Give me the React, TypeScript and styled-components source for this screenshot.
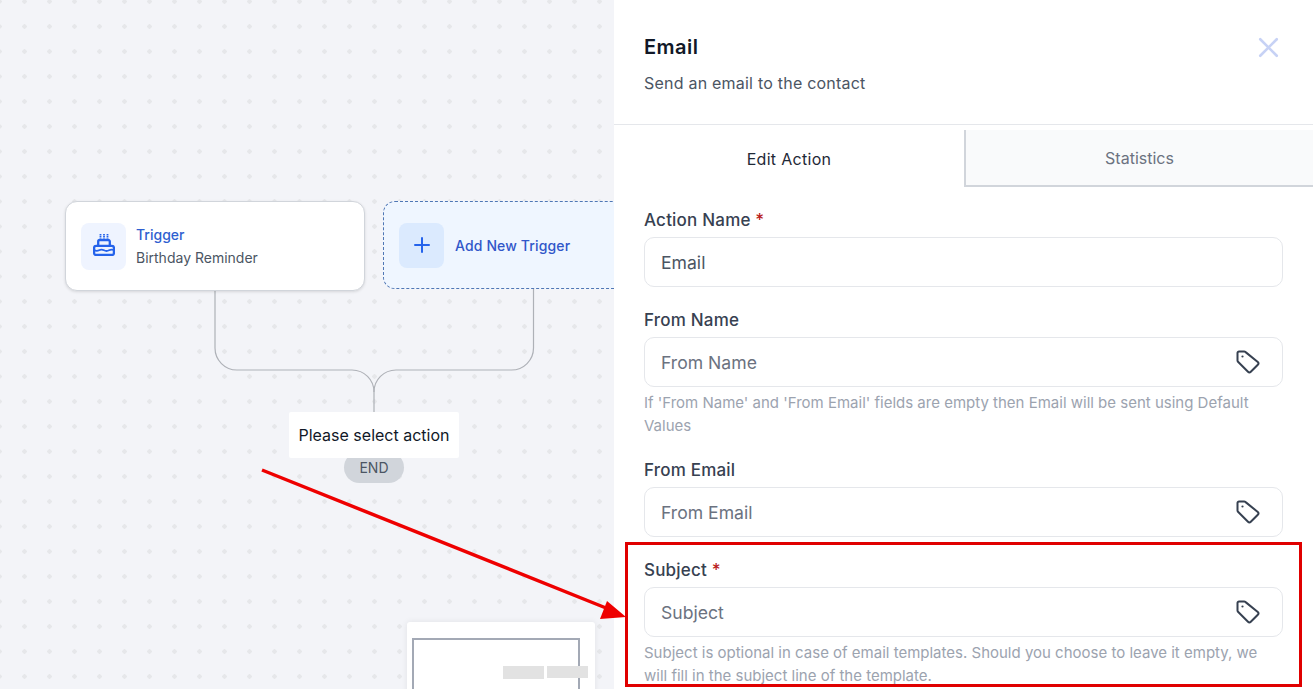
import React from "react";
import styled, { createGlobalStyle } from "styled-components";
import { Plus, X } from "lucide-react";

const fields = [
  { label: "From Name", placeholder: "From Name", tag: true, hint: "If 'From Name' and 'From Email' fields are empty then Email will be sent using Default Values" },
  { label: "From Email", placeholder: "From Email", tag: true },
  { label: "Subject", placeholder: "Subject", tag: true, required: true, hint: "Subject is optional in case of email templates. Should you choose to leave it empty, we will fill in the subject line of the template." },
];

const TagIcon = () => (
  <svg width="24" height="24" viewBox="0 0 24 24" fill="none" stroke="#374151" strokeWidth="2" strokeLinejoin="round">
    <path d="M3 1.5H8a2.4 2.4 0 0 1 1.6.6L21.8 12a2 2 0 0 1 0 2.8L14.8 21.8a2 2 0 0 1-2.8 0L2 11.8A2 2 0 0 1 1.5 10.4V3A1.5 1.5 0 0 1 3 1.5z" />
    <circle cx="6.5" cy="6.5" r="1.1" fill="#374151" stroke="none" />
  </svg>
);

const Field = ({ label, placeholder, value, tag, required, hint }: any) => (
  <FieldWrap>
    <Label>
      {label}
      {required && <Star> *</Star>}
    </Label>
    <InputBox>
      <Input placeholder={placeholder} defaultValue={value} />
      {tag && <TagIcon />}
    </InputBox>
    {hint && <Hint>{hint}</Hint>}
  </FieldWrap>
);

const CakeIcon = () => (
  <CakeSvg width="22" height="22" viewBox="0 0 22 22" fill="none" stroke="#2563eb" strokeWidth="2.3">
    <path d="M7.5 0v4.8M11 0v4.8M14.5 0v4.8" strokeWidth="1.8" strokeDasharray="1.5 0.6" />
    <path d="M5.2 12V7.5A1.5 1.5 0 0 1 6.7 6h8.6a1.5 1.5 0 0 1 1.5 1.5V12" />
    <rect x="1.1" y="11.8" width="19.8" height="9.2" rx="2" />
    <path d="M1 16c2 1.2 3.4 1.2 5 0.3 1.6-0.9 3.4-0.9 5 0 1.6 0.9 3.4 0.9 5 0 1.6-0.9 3-0.9 5-0.3" strokeWidth="1.8" />
  </CakeSvg>
);

export default function App() {
  return (
    <Page>
      <GlobalStyle />
      <Canvas>
        <Connectors width="614" height="689" fill="none" stroke="#aeb1b7" strokeWidth="1.2">
          <path d="M215 290V348a22 22 0 0 0 22 22H352a22 22 0 0 1 22 22V412" />
          <path d="M533.5 288V348a22 22 0 0 1-22 22H396a22 22 0 0 0-22 22" />
        </Connectors>
        <TriggerCard>
          <IconBox>
            <CakeIcon />
          </IconBox>
          <div>
            <TriggerTitle>Trigger</TriggerTitle>
            <TriggerSub>Birthday Reminder</TriggerSub>
          </div>
        </TriggerCard>
        <AddCard>
          <AddIconBox>
            <Plus size={24} strokeWidth={2} color="#2563eb" />
          </AddIconBox>
          <AddText>Add New Trigger</AddText>
        </AddCard>
        <EndPill>END</EndPill>
        <ActionNote>Please select action</ActionNote>
        <MiniMap>
          <MiniView />
          <MiniBlock $left={96} $width={41} $height={13} />
          <MiniBlock $left={140} $width={41} $height={12} />
        </MiniMap>
      </Canvas>

      <Panel>
        <Header>
          <div>
            <Title>Email</Title>
            <Subtitle>Send an email to the contact</Subtitle>
          </div>
          <CloseIcon size={33} strokeWidth={1.9} color="#c7d2f5" />
        </Header>
        <Tabs>
          <TabItem $active>Edit Action</TabItem>
          <TabItem>Statistics</TabItem>
        </Tabs>
        <Form>
          <Field label="Action Name" value="Email" required />
          {fields.map((f) => (
            <Field key={f.label} {...f} />
          ))}
        </Form>
      </Panel>

      <Arrow width="1313" height="689">
        <line x1="262" y1="470" x2="606" y2="608" stroke="#ee0000" strokeWidth="3.5" />
        <polygon points="626,617 600,619 607,601" fill="#ee0000" />
      </Arrow>
      <Highlight />
    </Page>
  );
}

const GlobalStyle = createGlobalStyle`
  html, body {
    margin: 0;
    padding: 0;
    background: #fff;
    font-family: Inter, "Noto Sans", sans-serif;
  }
`;

const Page = styled.div`
  /* Layout */
  position: relative;
  display: flex;
  /* Size */
  width: 1313px;
  height: 689px;
  /* Other */
  overflow: hidden;
`;

const Canvas = styled.div`
  /* Layout */
  position: relative;
  flex: 0 0 614px;
  /* Size */
  height: 689px;
  /* Color */
  background-color: #f3f4f8;
  background-image: radial-gradient(circle, #e6e7ea 2px, transparent 2.4px);
  background-size: 25px 25px;
  background-position: 12px -11px;
  /* Other */
  overflow: hidden;
`;

const Connectors = styled.svg`
  position: absolute;
  left: 0;
  top: 0;
`;

const TriggerCard = styled.div`
  /* Layout */
  position: absolute;
  left: 65px;
  top: 201px;
  display: flex;
  align-items: center;
  gap: 10px;
  /* Size */
  box-sizing: border-box;
  width: 300px;
  height: 90px;
  padding: 0 15px;
  /* Color */
  background: #fff;
  border: 1px solid #d1d5db;
  border-radius: 12px;
  box-shadow: 0 1px 3px rgba(0, 0, 0, 0.12);
`;

const IconBox = styled.div`
  /* Layout */
  display: flex;
  align-items: center;
  justify-content: center;
  /* Size */
  width: 45px;
  height: 47px;
  /* Color */
  background: #eff4ff;
  border-radius: 8px;
`;

const CakeSvg = styled.svg`
  margin-bottom: 3px;
`;

const TriggerTitle = styled.div`
  font-size: 14px;
  line-height: 20px;
  font-weight: 500;
  color: #2f5fd0;
  margin-bottom: 3px;
`;

const TriggerSub = styled.div`
  font-size: 14px;
  line-height: 20px;
  color: #4b5563;
`;

const AddCard = styled.div`
  /* Layout */
  position: absolute;
  left: 383px;
  top: 201px;
  display: flex;
  align-items: center;
  gap: 11px;
  /* Size */
  box-sizing: border-box;
  width: 300px;
  height: 88px;
  padding: 0 15px;
  /* Color */
  background: #eff6ff;
  border: 1px dashed #4f77b5;
  border-radius: 12px;
`;

const AddIconBox = styled.div`
  /* Layout */
  display: flex;
  align-items: center;
  justify-content: center;
  /* Size */
  width: 45px;
  height: 45px;
  /* Color */
  background: #dbeafe;
  border-radius: 8px;
`;

const AddText = styled.div`
  font-size: 14px;
  font-weight: 500;
  letter-spacing: 0.13px;
  color: #3157c9;
`;

const ActionNote = styled.div`
  /* Layout */
  position: absolute;
  left: 289px;
  top: 412px;
  display: flex;
  align-items: center;
  justify-content: center;
  /* Size */
  width: 170px;
  height: 46px;
  /* Color */
  background: #fff;
  border-radius: 2px;
  font-size: 16px;
  color: #111827;
`;

const EndPill = styled.div`
  /* Layout */
  position: absolute;
  left: 344px;
  top: 452px;
  display: flex;
  align-items: center;
  justify-content: center;
  /* Size */
  width: 60px;
  height: 31px;
  /* Color */
  background: #d1d5db;
  border-radius: 16px;
  font-size: 14px;
  color: #4b5563;
`;

const MiniMap = styled.div`
  /* Layout */
  position: absolute;
  left: 407px;
  top: 622px;
  /* Size */
  width: 188px;
  height: 90px;
  /* Color */
  background: #fff;
  border-radius: 3px;
  box-shadow: 0 0 6px rgba(0, 0, 0, 0.08);
`;

const MiniView = styled.div`
  /* Layout */
  position: absolute;
  left: 5px;
  top: 16px;
  /* Size */
  box-sizing: border-box;
  width: 168px;
  height: 90px;
  /* Color */
  border: 2px solid #a3a9b5;
`;

const MiniBlock = styled.div<{ $left: number; $width: number; $height: number }>`
  /* Layout */
  position: absolute;
  left: ${(p) => p.$left}px;
  top: 44px;
  /* Size */
  width: ${(p) => p.$width}px;
  height: ${(p) => p.$height}px;
  /* Color */
  background: #e2e2e2;
`;

const Panel = styled.div`
  /* Layout */
  display: flex;
  flex-direction: column;
  flex: 1;
  /* Color */
  background: #fff;
`;

const Header = styled.div`
  /* Layout */
  display: flex;
  justify-content: space-between;
  align-items: flex-start;
  /* Size */
  box-sizing: border-box;
  height: 125px;
  padding: 33px 28px 0 30px;
  /* Color */
  border-bottom: 1px solid #e5e7eb;
`;

const CloseIcon = styled(X)`
  margin-top: -2px;
`;

const Title = styled.div`
  font-size: 20px;
  line-height: 28px;
  font-weight: 600;
  letter-spacing: 0.5px;
  color: #111827;
`;

const Subtitle = styled.div`
  margin-top: 10px;
  font-size: 16px;
  line-height: 24px;
  letter-spacing: 0.22px;
  color: #4b5563;
`;

const Tabs = styled.div`
  /* Layout */
  display: flex;
  /* Size */
  margin-top: 5px;
  height: 57px;
`;

const TabItem = styled.div<{ $active?: boolean }>`
  /* Layout */
  display: flex;
  align-items: center;
  justify-content: center;
  flex: ${(p) => (p.$active ? "0 0 350px" : "1")};
  /* Size */
  box-sizing: border-box;
  /* Color */
  font-size: 16px;
  letter-spacing: ${(p) => (p.$active ? "0.3px" : "0")};
  color: ${(p) => (p.$active ? "#1f2937" : "#6b7280")};
  background: ${(p) => (p.$active ? "#fff" : "#f9fafb")};
  border-left: ${(p) => (p.$active ? "none" : "2px solid #d1d5db")};
  border-bottom: ${(p) => (p.$active ? "none" : "2px solid #d1d5db")};
`;

const Form = styled.div`
  /* Layout */
  display: flex;
  flex-direction: column;
  gap: 21px;
  /* Size */
  padding: 21px 30px 0;
`;

const FieldWrap = styled.div`
  display: flex;
  flex-direction: column;
`;

const Label = styled.div`
  margin-bottom: 5px;
  font-size: 17px;
  line-height: 24px;
  font-weight: 500;
  letter-spacing: 0.2px;
  color: #374151;
`;

const Star = styled.span`
  color: #b91c1c;
`;

const InputBox = styled.div`
  /* Layout */
  display: flex;
  align-items: center;
  /* Size */
  box-sizing: border-box;
  height: 50px;
  padding: 0 22px 0 16px;
  /* Color */
  border: 1px solid #e5e7eb;
  border-radius: 10px;
  background: #fff;
`;

const Input = styled.input`
  /* Layout */
  flex: 1;
  min-width: 0;
  /* Size */
  padding: 0;
  /* Color */
  border: none;
  outline: none;
  font-family: inherit;
  font-size: 17.6px;
  color: #4b5563;
  background: transparent;
  &::placeholder {
    color: #6b7280;
    opacity: 1;
  }
`;

const Hint = styled.div`
  margin-top: 5px;
  font-size: 15px;
  line-height: 22.5px;
  color: #9ca3af;
`;

const Arrow = styled.svg`
  position: absolute;
  left: 0;
  top: 0;
  pointer-events: none;
`;

const Highlight = styled.div`
  /* Layout */
  position: absolute;
  left: 625px;
  top: 542px;
  /* Size */
  box-sizing: border-box;
  width: 677px;
  height: 145px;
  /* Color */
  border: 3px solid #e00000;
`;
